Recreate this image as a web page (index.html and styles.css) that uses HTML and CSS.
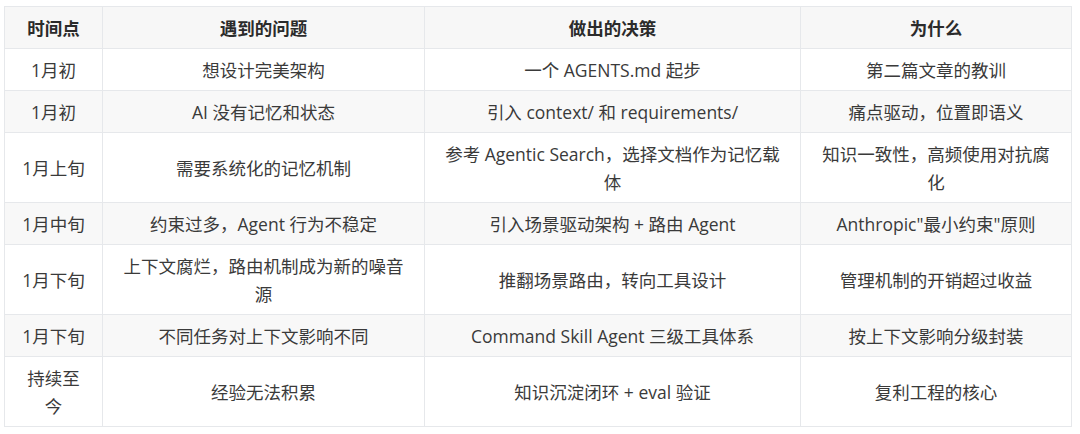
FILE: index.html
```html
<!DOCTYPE html>
<html lang="zh-CN">
<head>
<meta charset="utf-8">
<title>时间线</title>
<link rel="stylesheet" href="styles.css">
</head>
<body>
<table class="timeline">
  <colgroup>
    <col class="c1"><col class="c2"><col class="c3"><col class="c4">
  </colgroup>
  <thead>
    <tr><th>时间点</th><th>遇到的问题</th><th>做出的决策</th><th>为什么</th></tr>
  </thead>
  <tbody>
    <tr><td>1月初</td><td>想设计完美架构</td><td>一个 AGENTS.md 起步</td><td>第二篇文章的教训</td></tr>
    <tr><td>1月初</td><td>AI 没有记忆和状态</td><td>引入 context/ 和 requirements/</td><td>痛点驱动，位置即语义</td></tr>
    <tr><td>1月上旬</td><td>需要系统化的记忆机制</td><td>参考 Agentic Search，选择文档作为记忆载体</td><td>知识一致性，高频使用对抗腐化</td></tr>
    <tr><td>1月中旬</td><td>约束过多，Agent 行为不稳定</td><td>引入场景驱动架构 + 路由 Agent</td><td>Anthropic"最小约束"原则</td></tr>
    <tr><td>1月下旬</td><td>上下文腐烂，路由机制成为新的噪音源</td><td>推翻场景路由，转向工具设计</td><td>管理机制的开销超过收益</td></tr>
    <tr><td>1月下旬</td><td>不同任务对上下文影响不同</td><td>Command Skill Agent 三级工具体系</td><td>按上下文影响分级封装</td></tr>
    <tr><td>持续至今</td><td>经验无法积累</td><td>知识沉淀闭环 + eval 验证</td><td>复利工程的核心</td></tr>
  </tbody>
</table>
</body>
</html>
```

FILE: styles.css
```css
html, body {
  background: #ffffff;
}
body {
  margin: 6px 0 0 4px;
  font-family: "Open Sans", "Noto Sans CJK SC", sans-serif;
  font-size: 17.5px;
  color: #3a3a3a;
}
.timeline {
  border-collapse: collapse;
  table-layout: fixed;
  width: 1067px;
}
.c1 { width: 98px; }
.c2 { width: 322px; }
.c3 { width: 376px; }
.c4 { width: 271px; }
.timeline th,
.timeline td {
  border: 1px solid #e6e8eb;
  padding: 7px 15px 6px;
  line-height: 28px;
  text-align: center;
  vertical-align: middle;
}
.timeline th {
  background: #f7f7f7;
  font-weight: 700;
  color: #2b2b2b;
}
.timeline tbody tr:nth-child(even) td {
  background: #f8f8f8;
}
```
